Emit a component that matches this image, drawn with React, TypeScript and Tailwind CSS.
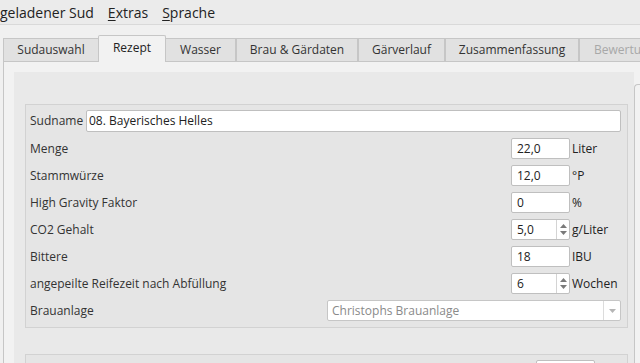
import React from "react";

const tabs = [
	{ name: "Sudauswahl", w: "w-[96px]" },
	{ name: "Rezept", w: "w-[68px]", active: true },
	{ name: "Wasser", w: "w-[71px]" },
	{ name: "Brau & Gärdaten", w: "w-[122px]" },
	{ name: "Gärverlauf", w: "w-[87px]" },
	{ name: "Zusammenfassung", w: "w-[134px]" },
	{ name: "Bewertung", w: "w-[90px]", disabled: true },
];

const rows = [
	{ label: "Menge", value: "22,0", unit: "Liter" },
	{ label: "Stammwürze", value: "12,0", unit: "°P" },
	{ label: "High Gravity Faktor", value: "0", unit: "%" },
	{ label: "CO2 Gehalt", value: "5,0", unit: "g/Liter", spin: true },
	{ label: "Bittere", value: "18", unit: "IBU" },
	{ label: "angepeilte Reifezeit nach Abfüllung", value: "6", unit: "Wochen", spin: true },
];

function SpinArrows() {
	return (
		<div className="flex flex-col items-center justify-center w-[13px] h-full border-l border-[#d4d4d4] gap-[3px]">
			<svg width="7" height="4" viewBox="0 0 7 4">
				<path d="M0 4 L3.5 0 L7 4 Z" fill="#7a7a7a" />
			</svg>
			<svg width="7" height="4" viewBox="0 0 7 4">
				<path d="M0 0 L3.5 4 L7 0 Z" fill="#7a7a7a" />
			</svg>
		</div>
	);
}

export default function App() {
	return (
		<div
			className="w-[640px] h-[363px] overflow-hidden bg-[#f0f0f0] text-[#333] flex flex-col"
			style={{ fontFamily: '"Open Sans", "Liberation Sans", sans-serif' }}>
			{/* Menü */}
			<div className="h-[25px] shrink-0 bg-[#ebebeb] border-b border-[#d9d9d9] flex items-center text-[14px] text-[#222]">
				<span className="pr-[14px]">geladener Sud</span>
				<span className="pr-[14px]">
					<span className="underline underline-offset-2">E</span>xtras
				</span>
				<span>
					<span className="underline underline-offset-2">S</span>prache
				</span>
			</div>

			{/* Tabs */}
			<div className="h-[37px] shrink-0 flex items-end pl-[3px] pt-[10px]">
				{tabs.map((t) =>
					t.active ? (
						<div
							key={t.name}
							className={`${t.w} h-[27px] shrink-0 bg-[#f2f2f2] border border-b-0 border-[#c6c6c6] rounded-t-[2px] flex items-center justify-center text-[12px] text-[#222] -mx-px pb-[2px] relative z-10`}>
							{t.name}
						</div>
					) : (
						<div
							key={t.name}
							className={`${t.w} h-[24px] shrink-0 bg-[#e1e1e1] border border-[#c6c6c6] border-b-[#bcbcbc] flex items-center justify-center text-[12px] ${
								t.disabled ? "text-[#a8a8a8] justify-start pl-[14px]" : "text-[#333]"
							}`}>
							{t.name}
						</div>
					)
				)}
			</div>

			{/* Tab-Inhalt */}
			<div className="flex-1 ml-[3px] border-l border-t border-[#c6c6c6] bg-[#f2f2f2] pl-[10px] pt-[10px] flex -mt-px">
				<div className="flex-1 bg-[#e9e9e9] pl-[11px] pt-[32px] pr-[6px] flex flex-col">
					<div className="border border-[#d2d2d2] bg-[#e5e5e5] pl-[4px] pr-[6px] pt-[5px] pb-[6px] flex flex-col gap-[6px] text-[12px]">
						<div className="flex items-center h-[22px]">
							<span className="w-[56px] shrink-0">Sudname</span>
							<div className="flex-1 h-[22px] bg-white border border-[#bfbfbf] rounded-[2px] flex items-center px-[2px] text-[#222]">
								08. Bayerisches Helles
							</div>
						</div>
						{rows.map((r) => (
							<div key={r.label} className="flex items-center h-[21px]">
								<span className="flex-1">{r.label}</span>
								<div className="w-[59px] h-[21px] bg-white border border-[#bfbfbf] rounded-[2px] flex items-center text-[#222]">
									<span className="flex-1 pl-[5px]">{r.value}</span>
									{r.spin && <SpinArrows />}
								</div>
								<span className="w-[51px] pl-[2px] text-[#222]">{r.unit}</span>
							</div>
						))}
						<div className="flex items-center h-[21px]">
							<span className="flex-1">Brauanlage</span>
							<div className="w-[294px] h-[21px] bg-white border border-[#c6c6c6] rounded-[2px] flex items-center text-[#8a8a8a]">
								<span className="flex-1 pl-[4px]">Christophs Brauanlage</span>
								<div className="w-[17px] h-full border-l border-[#dcdcdc] flex items-center justify-center">
									<svg width="7" height="4" viewBox="0 0 7 4">
										<path d="M0 0 L3.5 4 L7 0 Z" fill="#b5b5b5" />
									</svg>
								</div>
							</div>
						</div>
					</div>
					<div className="mt-[26px] flex-1 border border-[#d2d2d2] bg-[#e5e5e5] flex justify-end pr-[32px] pt-[5px]">
						<div className="w-[59px] h-[20px] bg-white border border-[#bfbfbf] rounded-[2px]" />
					</div>
				</div>
				<div className="w-[6px] mt-[12px] border border-r-0 border-[#c6c6c6] rounded-tl-[4px] bg-[#f2f2f2]" />
			</div>
		</div>
	);
}
